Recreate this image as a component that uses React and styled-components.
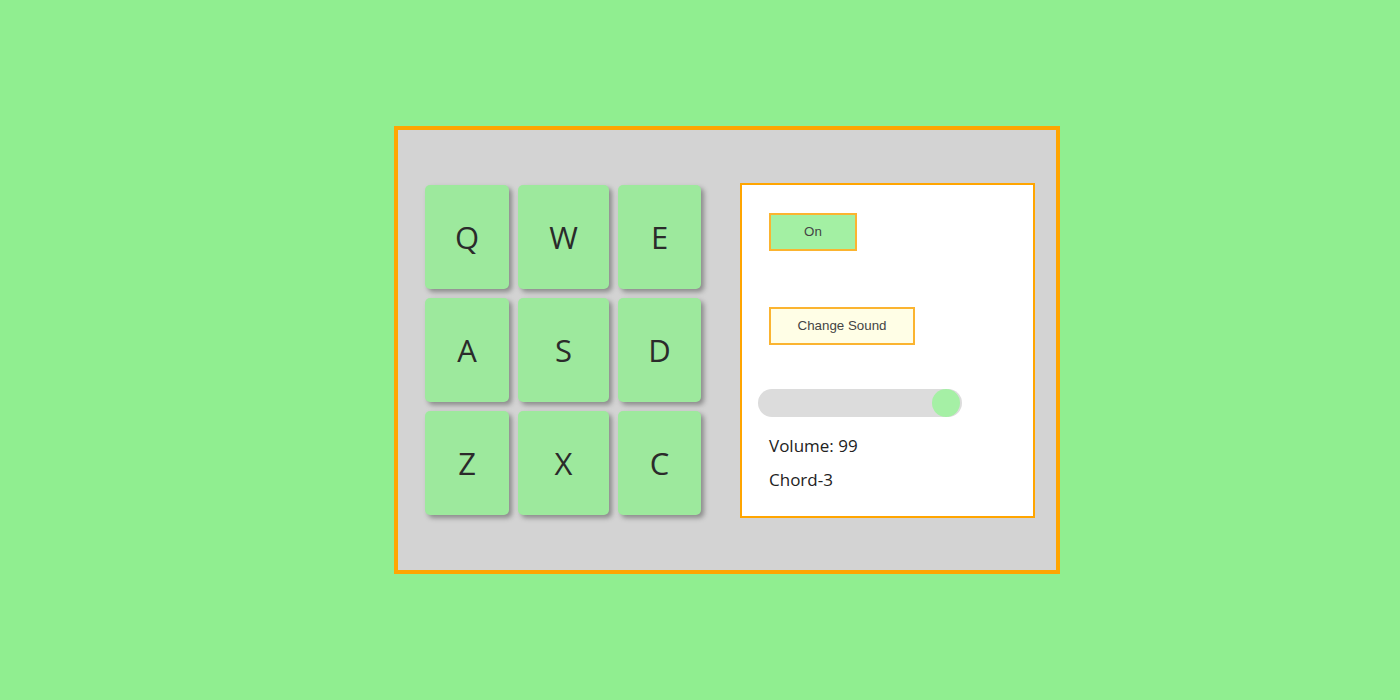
import React, { useState } from 'react';
import styled, { createGlobalStyle } from 'styled-components';

const GlobalStyle = createGlobalStyle`
  html, body {
    margin: 0;
    padding: 0;
    background: #90ee90;
  }
`;

const Page = styled.div`
  height: 700px;
  display: flex;
  align-items: center;
  justify-content: center;
  padding-left: 54px;
  box-sizing: border-box;
`;

const Machine = styled.div`
  width: 666px;
  height: 448px;
  box-sizing: border-box;
  border: 4px solid orange;
  background: #d3d3d3;
  display: flex;
  align-items: center;
  padding-left: 27px;
  gap: 39px;
`;

const PadGrid = styled.div`
  display: grid;
  grid-template-columns: 84px 91px 83px;
  grid-auto-rows: 104px;
  column-gap: 9px;
  row-gap: 9px;
`;

const Pad = styled.div`
  background: #9de99d;
  border-radius: 5px;
  box-shadow: 3px 3px 5px rgba(0, 0, 0, 0.35);
  display: flex;
  align-items: center;
  justify-content: center;
  font-family: "Open Sans", "Noto Sans", sans-serif;
  font-size: 31px;
  color: #2b2b2b;
  cursor: pointer;
`;

const Controls = styled.div`
  width: 295px;
  height: 335px;
  box-sizing: border-box;
  border: 2px solid orange;
  background: #fff;
  display: flex;
  flex-direction: column;
  align-items: flex-start;
  padding: 28px 0 0 27px;
`;

const Button = styled.button`
  width: ${({ $w }) => $w}px;
  height: 38px;
  border: 2px solid #fbb430;
  background: ${({ $bg }) => $bg};
  font-family: "Liberation Sans", Arial, sans-serif;
  font-size: 13.333px;
  color: #444;
  padding: 0;
  margin-bottom: ${({ $mb }) => $mb}px;
  cursor: pointer;
`;

const Slider = styled.input`
  -webkit-appearance: none;
  appearance: none;
  width: 204px;
  height: 28px;
  margin: 0 0 0 -11px;
  border-radius: 14px;
  background: #dcdcdc;
  outline: none;

  &::-webkit-slider-thumb {
    -webkit-appearance: none;
    appearance: none;
    width: 28px;
    height: 28px;
    border-radius: 50%;
    background: #a5f0a5;
    border: none;
    cursor: pointer;
  }
`;

const Readout = styled.div`
  font-family: "Open Sans", "Noto Sans", sans-serif;
  font-size: 17px;
  color: #222;
  line-height: 34px;
  margin-top: ${({ $mt }) => $mt || 0}px;
`;

const keys = ['Q', 'W', 'E', 'A', 'S', 'D', 'Z', 'X', 'C'];

const App = () => {
  const [volume, setVolume] = useState(99);

  return (
    <Page>
      <GlobalStyle />
      <Machine>
        <PadGrid>
          {keys.map((k) => (
            <Pad key={k}>{k}</Pad>
          ))}
        </PadGrid>
        <Controls>
          <Button $w={88} $bg="#a3f0a3" $mb={56}>
            On
          </Button>
          <Button $w={146} $bg="#fffee6" $mb={44}>
            Change Sound
          </Button>
          <Slider
            type="range"
            min="0"
            max="100"
            value={volume}
            onChange={(e) => setVolume(Number(e.target.value))}
          />
          <Readout $mt={12}>Volume: {volume}</Readout>
          <Readout>Chord-3</Readout>
        </Controls>
      </Machine>
    </Page>
  );
};

export default App;
